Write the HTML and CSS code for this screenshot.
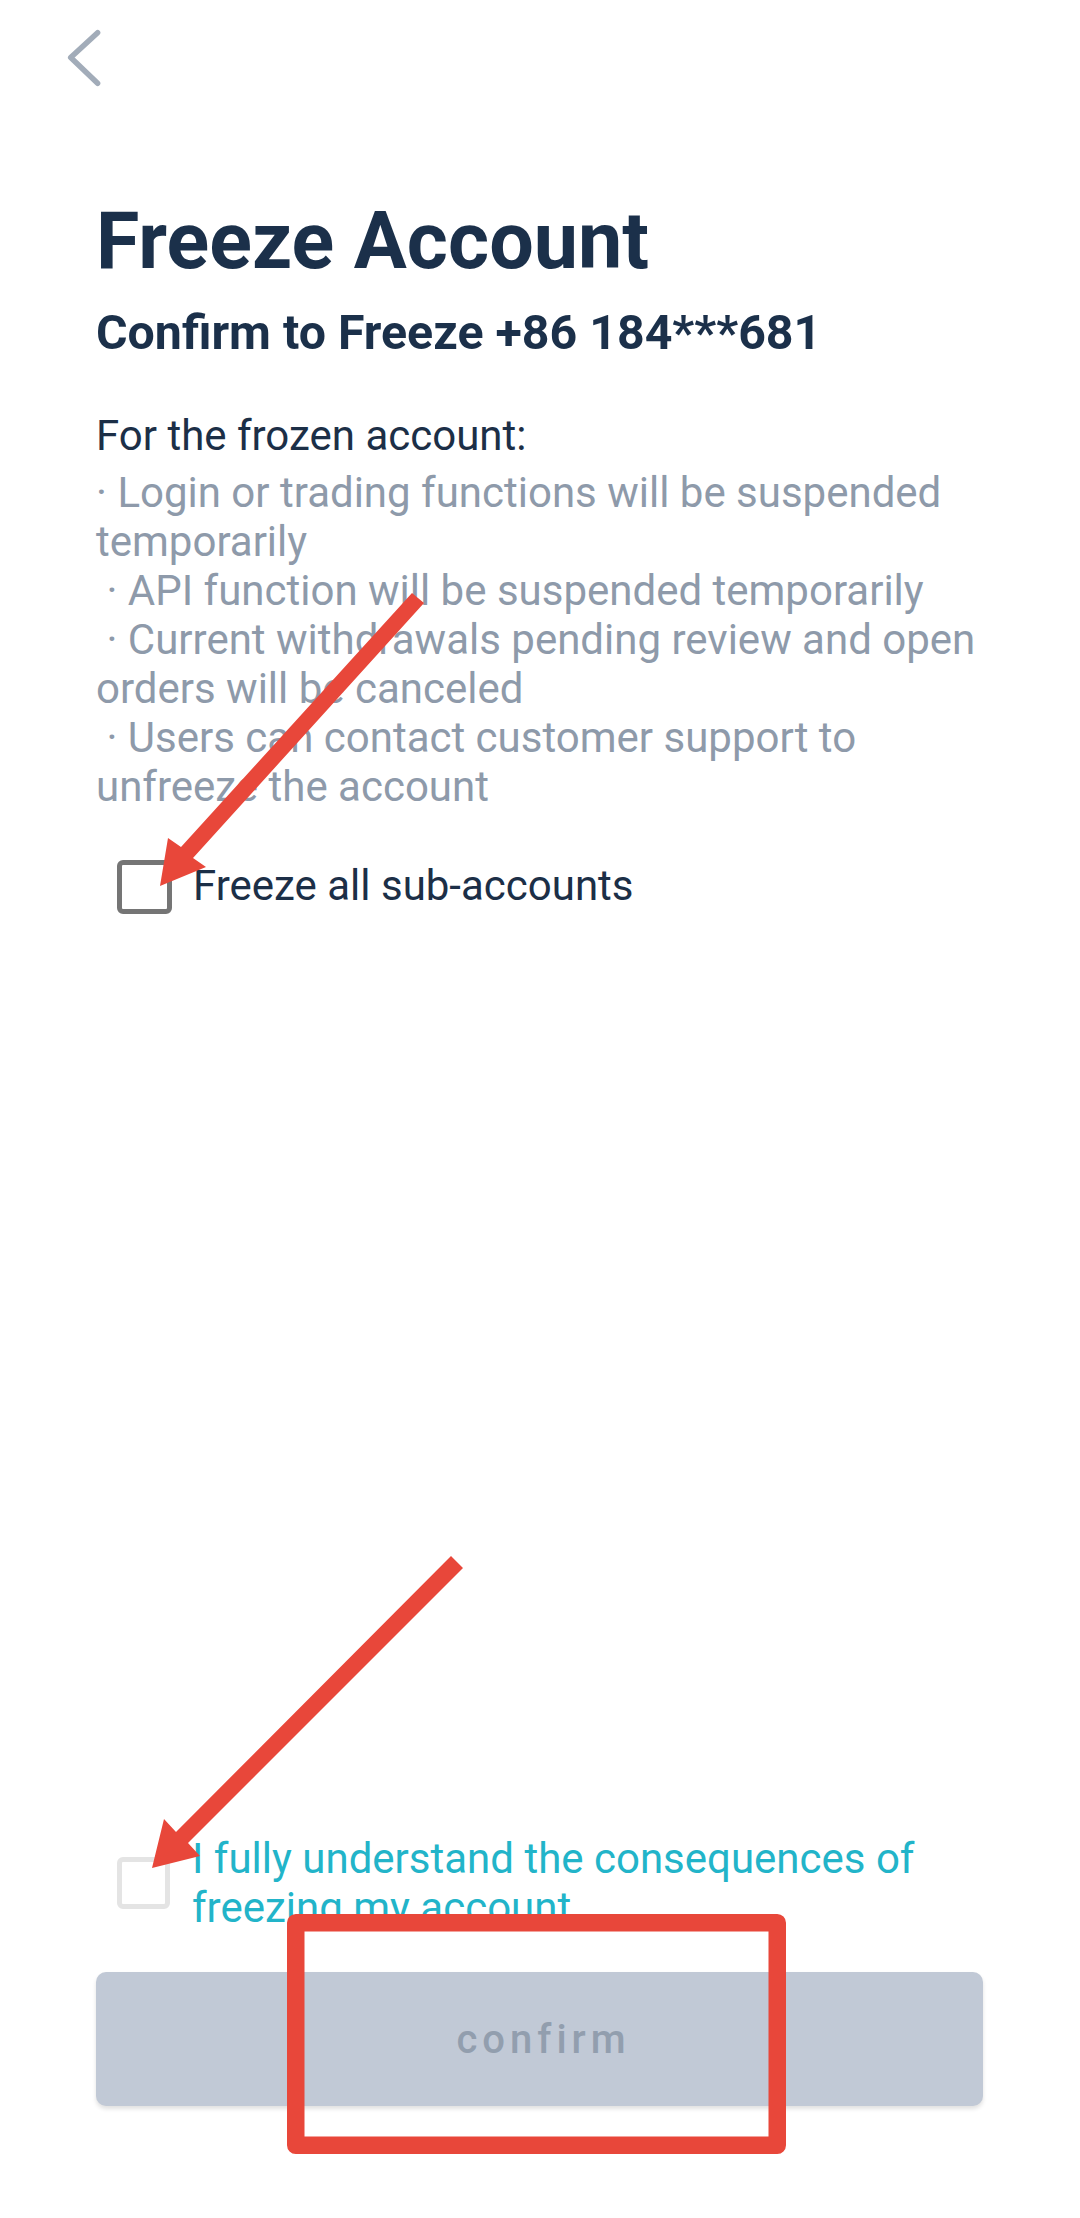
FILE: index.html
```
<!DOCTYPE html>
<html lang="en">
<head>
<meta charset="utf-8">
<title>Freeze Account</title>
<link rel="stylesheet" href="styles.css">
</head>
<body>
<div class="page">
  <header class="topbar">
    <svg class="back" width="40" height="64" viewBox="0 0 40 64" aria-label="Back">
      <polyline points="33.6,6.7 6.7,31.5 33.6,57.3" fill="none" stroke="#a2acb9" stroke-width="5.5" stroke-linecap="round" stroke-linejoin="round"/>
    </svg>
  </header>

  <main class="content">
    <h1 class="title">Freeze Account</h1>
    <h2 class="subtitle">Confirm to Freeze +86 184***681</h2>

    <p class="lead">For the frozen account:</p>
    <div class="rules">· Login or trading functions will be suspended temporarily
 · API function will be suspended temporarily
 · Current withdrawals pending review and open orders will be canceled
 · Users can contact customer support to unfreeze the account</div>

    <label class="check-row">
      <span class="box box-dark"></span>
      <span class="check-text">Freeze all sub-accounts</span>
    </label>
  </main>

  <footer class="footer">
    <label class="agree-row">
      <span class="box box-light"></span>
      <span class="agree-text">I fully understand the consequences of freezing my account</span>
    </label>
    <button class="confirm" type="button">confirm</button>
  </footer>

  <svg class="annotations" width="1080" height="2218" viewBox="0 0 1080 2218" aria-hidden="true">
    <polygon fill="#e8473a" points="412,593 181,847 168,838 160,886 206,867 193,858 424,603"/>
    <polygon fill="#e8473a" points="451,1556 176,1832 164,1819 152,1868 200,1856 188,1843 463,1568"/>
    <rect x="295.75" y="1922.75" width="481.5" height="222.5" fill="none" stroke="#e8473a" stroke-width="17.5" stroke-linejoin="round"/>
  </svg>
</div>
</body>
</html>
```

FILE: styles.css
```
* {
  box-sizing: border-box;
}

html, body {
  margin: 0;
  padding: 0;
  background: #ffffff;
}

body {
  font-family: Roboto, "Noto Sans", "Liberation Sans", sans-serif;
}

.page {
  position: relative;
  width: 1080px;
  min-height: 2218px;
  display: flex;
  flex-direction: column;
  overflow: hidden;
}

.topbar {
  padding: 26px 0 0 64px;
  height: 90px;
}

.back {
  display: block;
}

.content {
  padding: 0 97px 0 96px;
}

.title {
  margin: 104px 0 0;
  font-size: 79px;
  line-height: 94px;
  font-weight: 700;
  color: #1b304a;
  letter-spacing: 0;
}

.subtitle {
  margin: 15px 0 0;
  font-size: 48.3px;
  line-height: 59px;
  font-weight: 700;
  color: #1b304a;
}

.lead {
  margin: 50px 0 0;
  font-size: 42px;
  line-height: 48.7px;
  color: #1c2f47;
}

.rules {
  margin: 7px 0 0;
  font-size: 42px;
  line-height: 49px;
  color: #8e9aaa;
  white-space: pre-wrap;
}

.check-row {
  display: flex;
  align-items: center;
  gap: 21px;
  margin: 49px 0 0 21px;
}

.box {
  flex: 0 0 auto;
  width: 55px;
  height: 54px;
  border-radius: 6px;
  background: #ffffff;
}

.box-dark {
  border: 5px solid #757575;
}

.box-light {
  width: 53px;
  height: 52px;
  border: 5px solid #e4e4e4;
}

.check-text {
  font-size: 42px;
  line-height: 48.7px;
  color: #1c2f47;
}

.footer {
  margin-top: auto;
  padding: 0 97px 112px 96px;
  display: flex;
  flex-direction: column;
}

.agree-row {
  display: flex;
  align-items: center;
  gap: 22px;
  padding-left: 21px;
}

.agree-text {
  font-size: 42px;
  line-height: 49px;
  color: #22b4c9;
}

.confirm {
  margin-top: 40px;
  height: 134px;
  width: 100%;
  border: none;
  border-radius: 10px;
  background: #c1c9d6;
  box-shadow: 0 3px 4px rgba(0, 0, 0, 0.12);
  font-family: Roboto, "Noto Sans", sans-serif;
  font-size: 40px;
  font-weight: 500;
  letter-spacing: 5px;
  color: #929eae;
  padding: 0 0 0 8px;
}

.annotations {
  position: absolute;
  left: 0;
  top: 0;
  pointer-events: none;
}
```
